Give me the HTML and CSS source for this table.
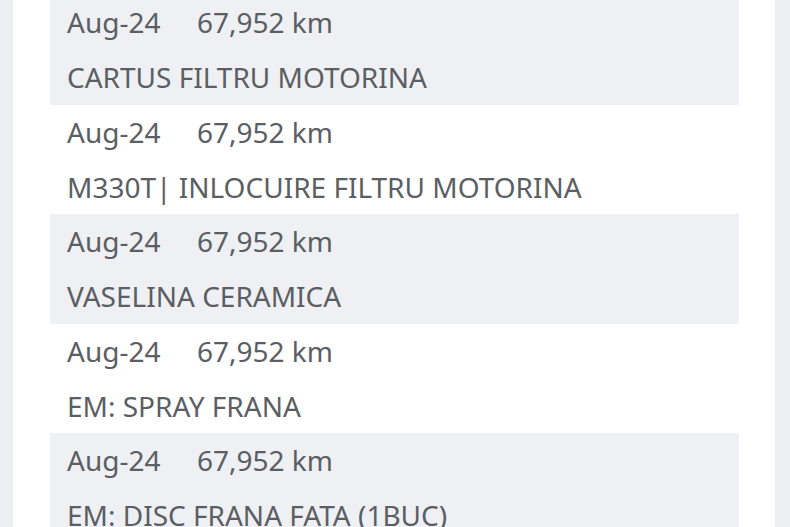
FILE: index.html
```html
<!DOCTYPE html>
<html>
<head>
<meta charset="utf-8">
<link rel="stylesheet" href="styles.css">
</head>
<body>
<div class="panel">
  <ul class="list">
    <li class="row shade"><div class="meta"><span class="date">Aug-24</span><span class="km">67,952 km</span></div><div class="name">CARTUS FILTRU MOTORINA</div></li>
    <li class="row"><div class="meta"><span class="date">Aug-24</span><span class="km">67,952 km</span></div><div class="name">M330T| INLOCUIRE FILTRU MOTORINA</div></li>
    <li class="row shade"><div class="meta"><span class="date">Aug-24</span><span class="km">67,952 km</span></div><div class="name">VASELINA CERAMICA</div></li>
    <li class="row"><div class="meta"><span class="date">Aug-24</span><span class="km">67,952 km</span></div><div class="name">EM: SPRAY FRANA</div></li>
    <li class="row shade"><div class="meta"><span class="date">Aug-24</span><span class="km">67,952 km</span></div><div class="name">EM: DISC FRANA FATA (1BUC)</div></li>
  </ul>
</div>
</body>
</html>
```
FILE: styles.css
```css
html, body {
  margin: 0;
  padding: 0;
  height: 100%;
  overflow: hidden;
  background: #eeeff3;
}
.panel {
  margin-left: 13px;
  width: 762px;
  height: 100%;
  background: #ffffff;
}
.list {
  list-style: none;
  margin: 0;
  padding: 0 0 0 37px;
  position: relative;
  top: -5px;
}
.row {
  width: 672px;
  height: 109.5px;
  padding-left: 17px;
  font-family: "Noto Sans", sans-serif;
  font-size: 28px;
  line-height: 55px;
  color: #5b5e63;
}
.shade {
  background: #eef0f3;
}
.meta {
  display: flex;
}
.date {
  width: 130px;
}
.name {
  white-space: nowrap;
}
```
